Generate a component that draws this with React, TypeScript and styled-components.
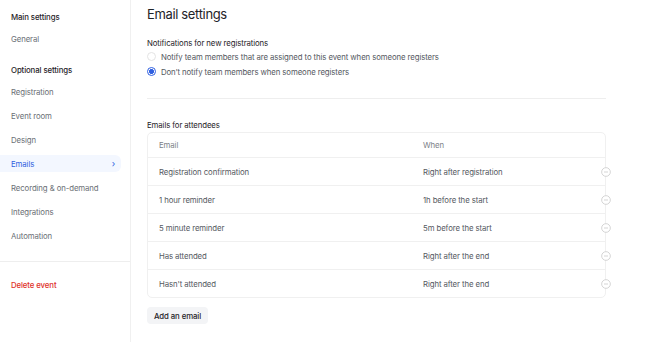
import React from 'react';
import styled, { createGlobalStyle } from 'styled-components';

const GlobalStyle = createGlobalStyle`
  html, body {
    margin: 0;
    padding: 0;
    background: #fff;
    font-family: Inter, "Noto Sans", sans-serif;
    -webkit-font-smoothing: antialiased;
  }
  * { box-sizing: border-box; }
`;

const sideItems = [
  'Registration',
  'Event room',
  'Design',
  'Emails',
  'Recording & on-demand',
  'Integrations',
  'Automation',
];

const emails = [
  { name: 'Registration confirmation', when: 'Right after registration' },
  { name: '1 hour reminder', when: '1h before the start' },
  { name: '5 minute reminder', when: '5m before the start' },
  { name: 'Has attended', when: 'Right after the end' },
  { name: "Hasn't attended", when: 'Right after the end' },
];

const MinusIcon = () => (
  <svg width="10" height="10" viewBox="0 0 12 12" fill="none">
    <circle cx="6" cy="6" r="5.2" fill="#fff" stroke="#cdcdcd" strokeWidth="1" />
    <line x1="3.6" y1="6" x2="8.4" y2="6" stroke="#cdcdcd" strokeWidth="1" />
  </svg>
);

const App = () => {
  return (
    <Page>
      <GlobalStyle />
      <Sidebar>
        <SideGroup>
          <SideHeading>Main settings</SideHeading>
          <SideItem>General</SideItem>
        </SideGroup>
        <SideGroup>
          <SideHeading>Optional settings</SideHeading>
          {sideItems.map((item) => (
            <SideItem key={item} $active={item === 'Emails'}>
              {item}
              {item === 'Emails' && <Chevron>›</Chevron>}
            </SideItem>
          ))}
        </SideGroup>
        <SideDivider />
        <DeleteItem>Delete event</DeleteItem>
      </Sidebar>
      <Main>
        <Title>Email settings</Title>
        <Section>
          <Label>Notifications for new registrations</Label>
          <RadioRow>
            <Radio />
            Notify team members that are assigned to this event when someone registers
          </RadioRow>
          <RadioRow>
            <Radio $checked />
            Don’t notify team members when someone registers
          </RadioRow>
        </Section>
        <Divider />
        <Label>Emails for attendees</Label>
        <Table>
          <HeaderRow>
            <Cell>Email</Cell>
            <Cell>When</Cell>
          </HeaderRow>
          {emails.map((e, i) => (
            <Row key={i}>
              <Cell>{e.name}</Cell>
              <Cell>{e.when}</Cell>
              <RemoveButton>
                <MinusIcon />
              </RemoveButton>
            </Row>
          ))}
        </Table>
        <AddButton>Add an email</AddButton>
      </Main>
    </Page>
  );
};

const Page = styled.div`
  display: flex;
  width: 650px;
  height: 342px;
  overflow: hidden;
  font-size: 7.8px;
  letter-spacing: -0.1px;
`;

const Sidebar = styled.aside`
  width: 131px;
  flex-shrink: 0;
  border-right: 1px solid #f0f0f0;
  padding-top: 9px;
  display: flex;
  flex-direction: column;
`;

const SideGroup = styled.div`
  display: flex;
  flex-direction: column;
  padding-right: 9px;
  margin-bottom: 8px;
`;

const SideHeading = styled.div`
  font-weight: 500;
  color: #1f2328;
  padding: 0 11px;
  height: 16px;
  line-height: 16px;
  margin-bottom: 5px;
`;

const SideItem = styled.div<{ $active?: boolean }>`
  display: flex;
  align-items: center;
  justify-content: space-between;
  color: ${({ $active }) => ($active ? '#2f5fe0' : '#6b6f76')};
  background: ${({ $active }) => ($active ? '#f3f7ff' : 'transparent')};
  border-radius: 0 6px 6px 0;
  height: 17px;
  padding: 0 6px 0 11px;
  margin-bottom: 7px;
`;

const Chevron = styled.span`
  font-size: 9px;
  color: #2f5fe0;
  line-height: 1;
`;

const SideDivider = styled.div`
  height: 1px;
  background: #eeeeee;
  margin: 2px 0 15px;
`;

const DeleteItem = styled.div`
  font-weight: 500;
  color: #e0312a;
  padding: 0 11px;
  height: 16px;
  line-height: 16px;
`;

const Main = styled.main`
  width: 459px;
  margin-left: 16px;
  padding-top: 4px;
  display: flex;
  flex-direction: column;
`;

const Title = styled.h1`
  margin: 0;
  font-size: 13px;
  letter-spacing: -0.35px;
  font-weight: 400;
  color: #1f2328;
  height: 20px;
  line-height: 20px;
`;

const Section = styled.div`
  display: flex;
  flex-direction: column;
  margin-top: 13px;
`;

const Label = styled.div`
  color: #1f2328;
  height: 12px;
  line-height: 13px;
`;

const RadioRow = styled.div`
  display: flex;
  align-items: center;
  gap: 5px;
  color: #55595f;
  height: 15px;
`;

const Radio = styled.span<{ $checked?: boolean }>`
  width: 9px;
  height: 9px;
  border-radius: 50%;
  border: 1px solid ${({ $checked }) => ($checked ? '#2f5fe0' : '#e4e4e4')};
  background: ${({ $checked }) =>
    $checked ? 'radial-gradient(circle, #2f5fe0 0 2.2px, #fff 2.6px)' : '#fff'};
  flex-shrink: 0;
`;

const Divider = styled.div`
  height: 1px;
  background: #eeeeee;
  margin: 19px 0 20px;
`;

const Table = styled.div`
  margin-top: 1px;
  border: 1px solid #f0f0f0;
  border-radius: 5px;
  display: flex;
  flex-direction: column;
`;

const HeaderRow = styled.div`
  display: grid;
  grid-template-columns: 264px 1fr;
  align-items: center;
  height: 24px;
  padding-left: 11px;
  color: #7d8188;
`;

const Row = styled.div`
  position: relative;
  display: grid;
  grid-template-columns: 264px 1fr;
  align-items: center;
  height: 28px;
  padding-left: 11px;
  border-top: 1px solid #f0f0f0;
  color: #55595f;
`;

const Cell = styled.div`
  white-space: nowrap;
`;

const RemoveButton = styled.span`
  position: absolute;
  right: -6px;
  top: 50%;
  transform: translateY(-50%);
  display: flex;
`;

const AddButton = styled.button`
  align-self: flex-start;
  margin-top: 9px;
  height: 17px;
  padding: 0 7px;
  border: none;
  border-radius: 4px;
  background: #f3f4f6;
  font-family: inherit;
  font-size: inherit;
  letter-spacing: inherit;
  font-weight: 500;
  color: #1f2328;
`;

export default App;
